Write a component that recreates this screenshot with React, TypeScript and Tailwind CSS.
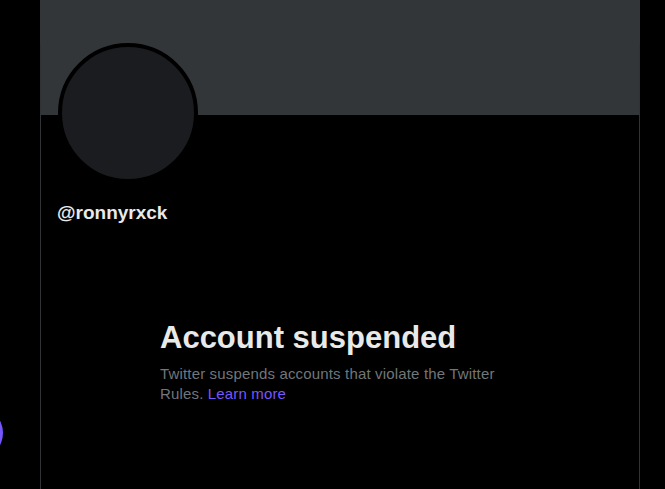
import React from 'react'

const font = { fontFamily: '"Liberation Sans", Arial, sans-serif' }

function ProfileHeader() {
  return (
    <div>
      <div className="h-[115px] bg-[#333639]" />
      <div className="border-x border-[#2f3336] px-4">
        <div className="-mt-[72px] ml-px h-[140px] w-[140px] rounded-full border-4 border-black bg-[#1b1c1f]" />
        <div className="mt-[18px] text-[19px] font-bold leading-6 text-[#e7e9ea]">@ronnyrxck</div>
      </div>
    </div>
  )
}

function SuspendedNotice() {
  return (
    <div className="flex-1 border-x border-[#2f3336] pl-[119px] pt-[95px]">
      <div className="w-[345px]">
        <h2 className="text-[31px] font-bold leading-9 text-[#e7e9ea]">Account suspended</h2>
        <p className="mt-2 text-[15px] leading-5 tracking-[0.16px] text-[#71767b]">
          Twitter suspends accounts that violate the Twitter Rules.{' '}
          <a className="text-[#7856ff]" href="#">Learn more</a>
        </p>
      </div>
    </div>
  )
}

export default function App() {
  return (
    <div className="relative h-[489px] w-[665px] overflow-hidden bg-black" style={font}>
      <div className="ml-10 flex h-full w-[600px] flex-col">
        <ProfileHeader />
        <SuspendedNotice />
      </div>
      <div className="absolute left-[-49px] top-[407px] h-[52px] w-[52px] rounded-full bg-[#7856ff]" />
    </div>
  )
}
